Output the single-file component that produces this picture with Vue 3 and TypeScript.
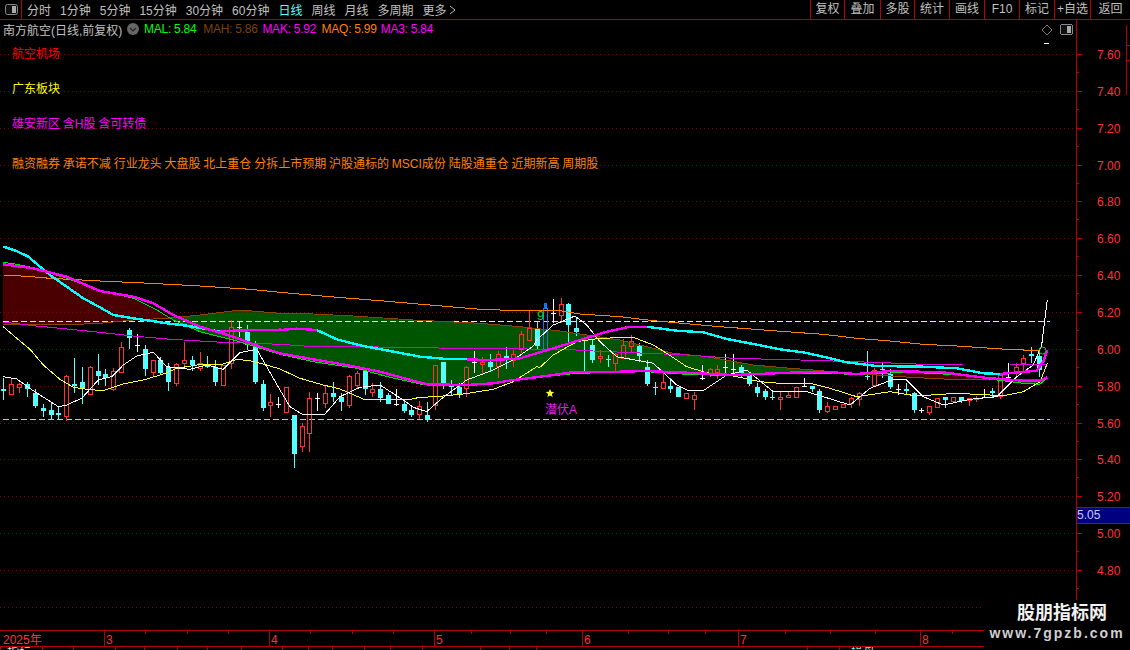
<script setup lang="ts">
type Pt = [number, number]
type Crop = [number, number]
const C3: Crop = [0, 230]
const C4: Crop = [280, 290]
const C5: Crop = [520, 290]
const C6: Crop = [790, 290]

function z(c: Crop, flat: number[]): Pt[] {
  const out: Pt[] = []
  for (let i = 0; i < flat.length; i += 2) out.push([c[0] + flat[i] / 3, c[1] + flat[i + 1] / 3])
  return out
}
function merge(...parts: Pt[][]): Pt[] {
  const all = parts.flat().sort((a, b) => a[0] - b[0])
  const out: Pt[] = []
  for (const p of all) {
    const last = out[out.length - 1]
    if (!last || p[0] - last[0] > 2) out.push(p)
  }
  return out
}
const toStr = (p: Pt[]) => p.map((q) => `${q[0].toFixed(1)},${q[1].toFixed(1)}`).join(' ')

const leftTabs = ['分时', '1分钟', '5分钟', '15分钟', '30分钟', '60分钟', '日线', '周线', '月线', '多周期', '更多']
const rightTabs = ['复权', '叠加', '多股', '统计', '画线', 'F10', '标记', '+自选', '返回']
const legend = [
  { t: 'MAL: 5.84', c: 'lg-green' },
  { t: 'MAH: 5.86', c: 'lg-brown' },
  { t: 'MAK: 5.92', c: 'lg-mag' },
  { t: 'MAQ: 5.99', c: 'lg-orange' },
  { t: 'MA3: 5.84', c: 'lg-mag' }
]
const tags = [
  { t: '航空机场', c: 'tag-red' },
  { t: '广东板块', c: 'tag-yellow' },
  { t: '雄安新区 含H股 含可转债', c: 'tag-mag' },
  { t: '融资融券 承诺不减 行业龙头 大盘股 北上重仓 分拆上市预期 沪股通标的 MSCI成份 陆股通重仓 近期新高 周期股', c: 'tag-orange' }
]

const priceY = (p: number) => Math.round(54 + (7.6 - p) * 184.3)
const gridYs: number[] = []
for (let i = 0; i <= 15; i++) gridYs.push(priceY(7.6 - i * 0.2))
const axisLabels = gridYs.slice(0, 15).map((y, i) => ({ y, t: (7.6 - i * 0.2).toFixed(2) }))
const minorYs = gridYs.slice(0, 15).map((y) => y + 18)

// candles: x, wickTop, bodyTop, bodyBottom, wickBottom, kind (crop pixels)
type Raw = [number, number, number, number, number, string]
const c3: Raw[] = [
  [10,445,477,483,510,'c'],[34,447,463,491,495,'r'],[58,460,463,470,488,'r'],[82,457,463,476,500,'c'],
  [106,478,489,527,533,'c'],[130,522,534,543,561,'c'],[154,515,540,555,568,'c'],[175,532,549,555,568,'c'],
  [199,435,439,557,572,'r'],[223,385,462,468,489,'c'],[247,412,456,478,521,'c'],[271,408,411,491,495,'r'],
  [295,372,423,438,466,'c'],[316,418,432,444,468,'c'],[340,415,424,478,482,'r'],[364,336,352,425,427,'r'],
  [388,295,300,323,357,'c'],[412,312,346,346,366,'w'],[436,346,358,417,438,'c'],[460,390,391,425,438,'r'],
  [481,380,390,430,436,'c'],[505,400,411,456,483,'c'],[529,400,401,458,468,'r'],[553,336,391,398,412,'r'],
  [577,378,390,405,422,'c'],[601,366,400,414,423,'r'],[622,378,403,411,414,'c'],[646,390,411,456,467,'c'],
  [670,406,406,464,465,'r'],[694,270,292,400,416,'r'],[718,272,292,292,322,'w'],[742,285,305,345,360,'c'],
  [766,334,345,456,462,'c'],[788,450,462,533,543,'c'],[811,492,516,524,561,'r'],[835,502,523,523,534,'w']
]
const c4: Raw[] = [
  [18,290,292,365,367,'r'],[43,375,375,491,533,'c'],[67,400,409,467,486,'r'],[88,306,325,428,486,'r'],
  [112,310,325,325,362,'w'],[136,286,310,339,354,'r'],[160,277,309,321,337,'c'],[184,310,321,336,363,'c'],
  [208,255,259,345,354,'r'],[232,243,249,285,296,'r'],[254,243,243,297,315,'c'],[277,280,297,305,321,'r'],
  [301,277,297,324,337,'c'],[325,310,315,342,342,'c'],[349,297,343,343,347,'w'],[373,332,342,363,370,'c'],
  [394,350,360,376,381,'c'],[418,334,349,372,388,'r'],[442,336,375,390,396,'c'],[466,224,226,345,360,'r'],
  [490,216,216,285,297,'c'],[514,270,285,290,315,'c'],[538,280,291,316,324,'c'],[559,228,232,293,321,'r'],
  [583,184,216,216,250,'w'],[607,201,216,222,253,'r'],[631,192,216,231,243,'c'],[655,184,192,228,264,'r'],
  [679,171,199,205,237,'c'],[700,180,193,210,231,'r'],[724,124,132,178,190,'r'],[748,62,115,150,150,'r'],
  [772,96,115,168,180,'c'],[796,40,55,178,178,'b']
]
const c5: Raw[] = [
  [100,27,70,70,98,'w'],[124,25,43,75,100,'r'],[145,40,43,104,157,'c'],[169,82,114,126,137,'c'],
  [193,150,150,153,253,'c'],[217,150,165,210,220,'c'],[241,180,198,205,218,'r'],[265,195,207,210,231,'c'],
  [286,190,193,218,245,'r'],[310,148,165,205,208,'r'],[334,135,153,168,190,'r'],[358,158,168,198,215,'c'],
  [382,210,232,282,288,'c'],[406,277,291,293,315,'c'],[430,250,277,294,296,'r'],[451,265,289,298,310,'c'],
  [475,292,292,320,322,'c'],[499,308,309,325,327,'r'],[523,305,316,326,360,'r'],[547,225,263,263,270,'w'],
  [571,235,238,250,262,'r'],[592,225,238,245,268,'r'],[616,192,231,231,250,'w'],[640,192,236,236,250,'w'],
  [664,224,232,250,262,'c'],[688,248,255,282,288,'c'],[712,280,291,308,320,'c'],[736,297,303,320,330,'c'],
  [757,303,321,323,330,'c'],[781,305,320,326,360,'r'],[805,305,316,322,323,'r']
]
const c6: Raw[] = [
  [18,290,292,322,323,'r'],[42,265,289,289,291,'w'],[66,288,288,298,305,'c'],[88,297,303,360,368,'c'],
  [112,335,348,362,368,'r'],[136,348,349,356,360,'r'],[160,341,343,350,353,'r'],[184,322,325,340,353,'r'],
  [208,307,310,326,347,'r'],[232,183,258,262,270,'c'],[253,235,240,285,285,'r'],[277,220,237,240,265,'c'],
  [301,238,252,290,298,'c'],[325,282,297,297,315,'w'],[349,279,297,304,315,'c'],[373,305,309,360,368,'c'],
  [394,353,361,361,369,'w'],[418,348,349,366,375,'r'],[442,325,325,350,352,'r'],[466,322,322,330,353,'c'],
  [490,321,322,333,336,'r'],[514,321,321,332,338,'c'],[538,324,325,330,347,'r'],[559,317,325,328,335,'r'],
  [583,297,322,322,325,'w'],[607,295,303,308,320,'c'],[631,254,255,318,328,'r'],[655,220,262,262,265,'w'],
  [679,220,232,245,258,'r'],[700,195,205,220,245,'r'],[724,171,193,197,218,'c'],[748,180,198,240,262,'c']
]
let redP = '', cyanWick = '', cyanBody = '', whiteP = '', blueP = ''
function addCandles(crop: Crop, rows: Raw[]) {
  for (const [zx, wt, bt, bb, wb, k] of rows) {
    const x = Math.round(crop[0] + zx / 3)
    const yy = (v: number) => Math.round(crop[1] + v / 3)
    const a = yy(wt), b = yy(bt), d = Math.max(yy(bb), yy(bt) + 1), e = yy(wb)
    const mx = x + 0.5
    const hollow = `M${mx} ${a}V${b}M${mx} ${d}V${Math.max(e, d)}M${x - 1.5} ${b + 0.5}H${x + 2.5}V${d + 0.5}H${x - 1.5}Z`
    if (k === 'r') redP += hollow
    if (k === 'b') blueP += hollow
    if (k === 'c') {
      cyanWick += `M${mx} ${a}V${e}`
      cyanBody += `M${x - 2} ${b}H${x + 3}V${d}H${x - 2}Z`
    }
    if (k === 'w') whiteP += `M${mx} ${a}V${e}M${x - 2} ${b + 0.5}H${x + 3}`
  }
}
addCandles(C3, c3)
addCandles(C4, c4)
addCandles(C5, c5)
addCandles(C6, c6)

const brownPts = merge(
  z(C3, [10,283,230,283,300,280,400,270,500,265,600,255,720,240,840,250]),
  z(C4, [0,70,100,72,220,78,400,90,600,100,720,110]),
  z(C5, [120,123,200,135,300,150,380,170,460,190,560,200,700,225]),
  z(C6, [0,235,70,240,180,250,360,262,480,268,640,268,750,270,772,262])
)
const greenPts = merge(
  z(C3, [10,97,50,103,100,113,200,145,300,180,400,205,470,240,520,270,600,305,700,330,840,373]),
  z(C4, [0,195,100,215,230,235,330,262,420,282,560,287,640,282,700,272]),
  z(C5, [0,270,100,257,170,250,300,247,380,245,500,253,640,257]),
  z(C6, [0,248,200,253,360,247,500,254,620,270,700,280,750,283,772,262])
)
const orangePts = merge(
  z(C3, [10,135,80,139,150,145,300,153,450,160,600,168,750,178,840,187]),
  z(C4, [0,5,150,20,300,32,450,45,600,58,720,62]),
  z(C5, [120,62,180,72,300,80,400,92,600,110,840,128]),
  z(C6, [100,133,200,145,300,153,400,163,500,168,650,178,750,182])
)
const thinMagPts = merge(
  z(C3, [10,276,100,287,200,297,300,307,400,318,500,327,650,336,840,343]),
  z(C4, [100,170,240,170,530,175,650,175,780,178]),
  z(C5, [130,178,220,183,500,195,640,205,840,210]),
  z(C6, [100,212,250,217,400,223,520,225,660,225,770,222])
)
const yellowPts = merge(
  z(C3, [10,290,50,325,90,358,130,405,180,448,220,472,260,478,310,482,370,462,430,450,490,432,530,415,590,405,670,402,710,388,750,392,800,405,840,417]),
  z(C4, [0,238,60,265,130,285,180,297,250,327,320,327,380,330,420,322,470,320,550,312,640,298,700,275,780,232]),
  z(C5, [50,230,100,195,170,155,240,145,340,142,400,165,440,190,500,230,560,248,640,258,720,275,780,280]),
  z(C6, [60,280,120,295,200,320,300,305,380,318,500,310,640,317,700,305,750,275,772,220])
)
const whitePts = merge(
  z(C3, [10,440,50,447,100,482,175,530,200,525,245,505,295,450,335,440,370,405,410,378,460,367,500,410,570,418,620,405,670,418,720,368,770,358,800,410,840,480]),
  z(C4, [0,300,30,350,70,375,135,372,180,320,240,292,300,285,370,330,400,352,440,365,480,330,560,270,640,240,700,210,760,168]),
  z(C5, [50,150,100,105,165,78,200,105,240,155,290,200,400,220,470,285,500,300,550,302,620,255,680,240,760,305]),
  z(C6, [50,305,100,320,180,345,240,295,310,268,350,270,400,320,460,345,540,328,620,320,680,260,730,225,755,165,772,30])
)
const thickLow = merge(
  z(C3, [10,103,100,115,200,140,300,183,400,200,460,220,520,255,600,290,700,320,780,350,840,370]),
  z(C4, [0,185,100,208,200,225,300,245,400,272,440,283,560,285,640,280,700,270]),
  z(C5, [0,268,100,255,170,245,300,245,380,243,500,248,640,255]),
  z(C6, [0,248,100,245,200,252,300,243,460,247,520,255,600,265,700,272,750,272,772,262])
)
const cyanSegs: string[] = [
  toStr(z(C3, [10,50,50,63,85,80,120,110,150,135,200,170,250,205,300,232,340,255,400,265,450,272,500,280,560,287,620,297,660,305])),
  toStr(z(C4, [110,120,170,148,250,168,330,183,420,200,500,207,560,208])),
  toStr([...z(C5, [380,110,470,122,550,127,620,147,700,162,780,178]), ...z(C6, [0,182,40,187,100,200,170,217,260,228,400,230,500,235,580,250,630,252])])
]
const magSegs: string[] = [
  toStr([...z(C3, [660,305,700,302,780,300,840,299]), ...z(C4, [0,120,50,116,110,120])]),
  toStr([...z(C4, [560,208,620,210,700,207]), ...z(C5, [0,205,90,178,180,150,260,125,330,110,380,110])]),
  toStr(z(C6, [630,252,740,242,760,215,772,180]))
]

function valueAt(p: Pt[], x: number): number {
  if (x <= p[0][0]) return p[0][1]
  for (let i = 1; i < p.length; i++) {
    if (x <= p[i][0]) {
      const t = (x - p[i - 1][0]) / (p[i][0] - p[i - 1][0])
      return p[i - 1][1] + t * (p[i][1] - p[i - 1][1])
    }
  }
  return p[p.length - 1][1]
}
let greenFill = '', redFill = ''
for (let x = 3; x < 1047; x++) {
  const a = Math.round(valueAt(brownPts, x))
  const b = Math.round(valueAt(greenPts, x))
  if (a < b) greenFill += `M${x} ${a}H${x + 1}V${b}H${x}Z`
  else if (b < a) redFill += `M${x} ${b}H${x + 1}V${a}H${x}Z`
}

const brownStr = toStr(brownPts), greenStr = toStr(greenPts), orangeStr = toStr(orangePts)
const thinMagStr = toStr(thinMagPts), yellowStr = toStr(yellowPts), whiteStr = toStr(whitePts), thickLowStr = toStr(thickLow)

const months = [
  { x: 104, t: '3' }, { x: 269, t: '4' }, { x: 434, t: '5' }, { x: 582, t: '6' }, { x: 738, t: '7' }, { x: 920, t: '8' }
]
const timeTicks = [145, 187, 228, 310, 352, 393, 471, 510, 546, 628, 668, 705, 785, 830, 875, 952]
const tabs = [
  { w: 42, t: '指标' }, { w: 31, t: '' }, { w: 42, t: '' }, { w: 29, t: '' }, { w: 33, t: '' }, { w: 30, t: '' },
  { w: 34, t: '' }, { w: 41, t: '' }, { w: 26, t: '' }, { w: 24, t: '' }, { w: 32, t: '' }, { w: 26, t: '' },
  { w: 32, t: '' }, { w: 58, t: '' }, { w: 29, t: '' }, { w: 27, t: '' }, { w: 271, t: '' }, { w: 32, t: '' },
  { w: 32, t: '操盘' }, { w: 113, t: '' }
]
</script>

<template>
  <div class="app">
    <header class="toolbar">
      <div class="menu-btn">
        <svg width="14" height="12" viewBox="0 0 14 12">
          <rect x="0.5" y="0.5" width="12" height="10" rx="2" fill="#111" stroke="#888" />
          <rect x="7" y="2" width="4" height="7" fill="#aaa" />
        </svg>
      </div>
      <nav class="left-tabs">
        <span v-for="t in leftTabs" :key="t" class="tab" :class="{ active: t === '日线' }">{{ t }}</span>
        <svg class="more-arrow" width="7" height="10" viewBox="0 0 7 10">
          <path d="M1 1L6 5L1 9" fill="none" stroke="#bbb" stroke-width="1" />
        </svg>
      </nav>
      <nav class="right-tabs">
        <span v-for="t in rightTabs" :key="t" class="rtab">{{ t }}</span>
      </nav>
    </header>

    <main class="body">
      <section class="chart">
        <svg class="plot" width="1076" height="610" viewBox="0 20 1076 610" shape-rendering="crispEdges">
          <path :d="redFill" fill="#4a0000" />
          <path :d="greenFill" fill="#005500" />
          <line v-for="y in gridYs" :key="y" x1="0" x2="1076" :y1="y + 0.5" :y2="y + 0.5" class="grid" />
          <line x1="3" x2="1050" y1="321.5" y2="321.5" class="dash-y" />
          <line x1="3" x2="1050" y1="419.5" y2="419.5" class="dash-c" />
          <path :d="cyanWick" class="wick-c" />
          <path :d="cyanBody" class="body-c" />
          <path :d="redP" class="cand-r" />
          <path :d="blueP" class="cand-b" />
          <path :d="whiteP" class="cand-w" />
          <polyline :points="brownStr" class="ln brown" />
          <polyline :points="orangeStr" class="ln orange" />
          <polyline :points="thinMagStr" class="ln thinmag" />
          <polyline :points="greenStr" class="ln green" />
          <polyline :points="yellowStr" class="ln yellow" />
          <polyline :points="whiteStr" class="ln white" />
          <polyline v-for="s in cyanSegs" :key="s" :points="s" class="ln thick-c" />
          <polyline :points="thickLowStr" class="ln thick-m" />
          <polyline v-for="s in magSegs" :key="s" :points="s" class="ln thick-m" />
          <rect x="544" y="303" width="3" height="5" fill="#0a78ff" />
          <circle cx="1042.5" cy="350.5" r="3.5" fill="none" stroke="#00e000" shape-rendering="auto" />
          <path d="M550 389l1.2 2.8 3 .2-2.3 2 .7 3-2.6-1.6-2.6 1.6.7-3-2.3-2 3-.2z" fill="#ffff33" shape-rendering="auto" />
          <text x="537" y="320" class="nine">9</text>
          <text x="545" y="414" class="qian">潜伏A</text>
          <path d="M1047 25l5 5-5 5-5-5z" fill="none" stroke="#777" shape-rendering="auto" />
          <rect x="1044" y="43" width="5" height="1" fill="#fff" />
          <rect x="1060.5" y="24.5" width="12" height="10" rx="2" fill="#111" stroke="#888" />
          <rect x="1067" y="26" width="4" height="7" fill="#aaa" />
        </svg>
        <div class="legend">
          <span class="stock">南方航空(日线,前复权)</span>
          <svg class="drop" width="12" height="12" viewBox="0 0 12 12">
            <circle cx="6" cy="6" r="6" fill="#666" />
            <path d="M3 5l3 3 3-3" fill="none" stroke="#222" stroke-width="1.2" />
          </svg>
          <span v-for="l in legend" :key="l.t" class="lg" :class="l.c">{{ l.t }}</span>
        </div>
        <div class="tags">
          <div v-for="t in tags" :key="t.t" class="tag" :class="t.c">{{ t.t }}</div>
        </div>
      </section>
      <aside class="axis">
        <svg width="54" height="610" viewBox="1076 20 54 610" shape-rendering="crispEdges">
          <line v-for="a in axisLabels" :key="a.y" x1="1076" x2="1082" :y1="a.y + 0.5" :y2="a.y + 0.5" class="tick" />
          <line v-for="y in minorYs" :key="y" x1="1076" x2="1079" :y1="y + 0.5" :y2="y + 0.5" class="tick" />
          <text v-for="a in axisLabels" :key="a.t" x="1097" :y="a.y + 5" class="price">{{ a.t }}</text>
          <line x1="1126.5" x2="1126.5" y1="25" y2="95" class="tick" />
          <line x1="1126" x2="1130" y1="45.5" y2="45.5" class="tick" />
          <line x1="1126" x2="1130" y1="60.5" y2="60.5" class="tick" />
        </svg>
        <div class="cur-price">5.05</div>
      </aside>
    </main>

    <footer class="time">
      <svg width="1130" height="15" viewBox="0 631 1130 15" shape-rendering="crispEdges">
        <line v-for="x in timeTicks" :key="x" :x1="x + 0.5" :x2="x + 0.5" y1="631" y2="634" class="tick" />
        <line v-for="m in months" :key="m.x" :x1="m.x + 0.5" :x2="m.x + 0.5" y1="631" y2="646" class="tick" />
        <text x="3" y="644" class="price">2025年</text>
        <text v-for="m in months" :key="m.t" :x="m.x + 2" y="644" class="price">{{ m.t }}</text>
      </svg>
    </footer>
    <div class="tabs">
      <span v-for="(t, i) in tabs" :key="i" class="btab" :class="{ cy: t.t === '操盘' }" :style="{ width: t.w + 'px' }">{{ t.t }}</span>
    </div>

    <div class="watermark">
      <div class="wm1">股朋指标网</div>
      <div class="wm2">www.7gpzb.com</div>
    </div>
  </div>
</template>

<style>
html, body { background: #000; }
</style>

<style scoped>
.app {
  position: relative;
  width: 1130px;
  height: 650px;
  overflow: hidden;
  background: #000;
  font-family: "Liberation Sans", "Noto Sans CJK SC", sans-serif;
  font-size: 12px;
  display: flex;
  flex-direction: column;
}
.toolbar {
  height: 19px;
  flex: none;
  display: flex;
  border-bottom: 1px solid #b40000;
  color: #c0c0c0;
}
.menu-btn {
  width: 22px;
  border-right: 1px solid #b40000;
  padding: 4px 0 0 5px;
  box-sizing: border-box;
}
.left-tabs {
  display: flex;
  gap: 9px;
  align-items: center;
  padding-left: 5px;
  white-space: nowrap;
}
.tab.active { color: #55ffff; }
.more-arrow { margin-left: -7px; }
.right-tabs {
  margin-left: auto;
  display: grid;
  grid-template-columns: 34px 36px 34px 35px 35px 35px 35px 36px 40px;
  width: 320px;
}
.rtab {
  border-left: 1px solid #b40000;
  text-align: center;
  line-height: 19px;
  white-space: nowrap;
}
.body {
  height: 610px;
  flex: none;
  display: flex;
}
.chart {
  position: relative;
  width: 1076px;
  height: 610px;
  flex: none;
}
.plot { position: absolute; left: 0; top: 0; display: block; }
.legend {
  position: relative;
  display: flex;
  align-items: center;
  height: 20px;
  box-sizing: border-box;
  padding: 0 0 2px 3px;
  white-space: nowrap;
}
.stock { color: #c0c0c0; width: 124px; }
.drop { margin-left: 0; margin-right: 5px; flex: none; }
.lg { width: 59.2px; font-size: 12px; letter-spacing: -0.25px; }
.lg-green { color: #00ff00; }
.lg-brown { color: #7a4208; }
.lg-mag { color: #ff00ff; }
.lg-orange { color: #ff8000; }
.tags {
  position: relative;
  margin-top: 5px;
  padding-left: 12px;
  display: flex;
  flex-direction: column;
  white-space: nowrap;
  word-spacing: -0.5px;
}
.tag { height: 35px; line-height: 18px; }
.tag-red { color: #ff0000; }
.tag-yellow { color: #ffff00; }
.tag-mag { color: #ff00ff; height: 40px; }
.tag-orange { color: #ff8000; }
.grid { stroke: #800000; stroke-width: 1; stroke-dasharray: 1 3; }
.dash-y { stroke: #ffff33; stroke-width: 1; stroke-dasharray: 6 3; }
.dash-c { stroke: #44ffff; stroke-width: 1; stroke-dasharray: 6 3; }
.wick-c { stroke: #54ffff; fill: none; }
.body-c { fill: #54ffff; }
.cand-r { fill: none; stroke: #ff3232; stroke-width: 1; }
.cand-b { fill: none; stroke: #0a78ff; stroke-width: 1; }
.cand-w { fill: none; stroke: #fff; stroke-width: 1; }
.ln { fill: none; stroke-width: 1; }
.brown { stroke: #8a4600; }
.orange { stroke: #ff8000; }
.thinmag { stroke: #e000e0; }
.green { stroke: #00e000; }
.yellow { stroke: #ffff33; }
.white { stroke: #ffffff; }
.thick-c { stroke: #00ffff; stroke-width: 2.4; }
.thick-m { stroke: #ff00ff; stroke-width: 2.4; }
.nine { fill: #00e000; font-size: 13px; }
.qian { fill: #e020e0; font-size: 12px; }
.axis {
  position: relative;
  flex: none;
  width: 54px;
  height: 610px;
  box-sizing: border-box;
  border-left: 1px solid #b40000;
  margin-left: 0;
}
.axis svg { display: block; margin-left: -1px; }
.tick { stroke: #b40000; stroke-width: 1; }
.price { fill: #ff3232; font-size: 12px; }
.cur-price {
  position: absolute;
  left: 0;
  top: 487px;
  width: 54px;
  height: 17px;
  box-sizing: border-box;
  border-top: 1px solid #b40000;
  border-bottom: 1px solid #b40000;
  background: #000080;
  color: #c8c8ff;
  padding-left: 0;
  line-height: 15px;
}
.time {
  flex: none;
  height: 15px;
  border-top: 1px solid #b40000;
}
.time svg { display: block; }
.tabs {
  flex: none;
  height: 4px;
  border-top: 1px solid #b40000;
  display: flex;
  overflow: hidden;
}
.btab {
  flex: none;
  box-sizing: border-box;
  border-left: 1px solid #b40000;
  padding-left: 6px;
  line-height: 12px;
  height: 12px;
  margin-top: 0;
  color: #ddd;
  white-space: nowrap;
}
.btab.cy { color: #55ffff; padding-left: 11px; }
.watermark {
  position: absolute;
  right: 0;
  bottom: 0;
  width: 146px;
  height: 50px;
  background: #000;
  text-align: center;
}
.wm1 {
  margin-top: 3px;
  padding-left: 10px;
  font-size: 18px;
  font-weight: 700;
  line-height: 21px;
  color: #f2f2f2;
}
.wm2 {
  margin-top: 0;
  font-size: 14px;
  font-weight: 700;
  line-height: 18px;
  letter-spacing: 2px;
  color: #d0d0d0;
}
</style>
